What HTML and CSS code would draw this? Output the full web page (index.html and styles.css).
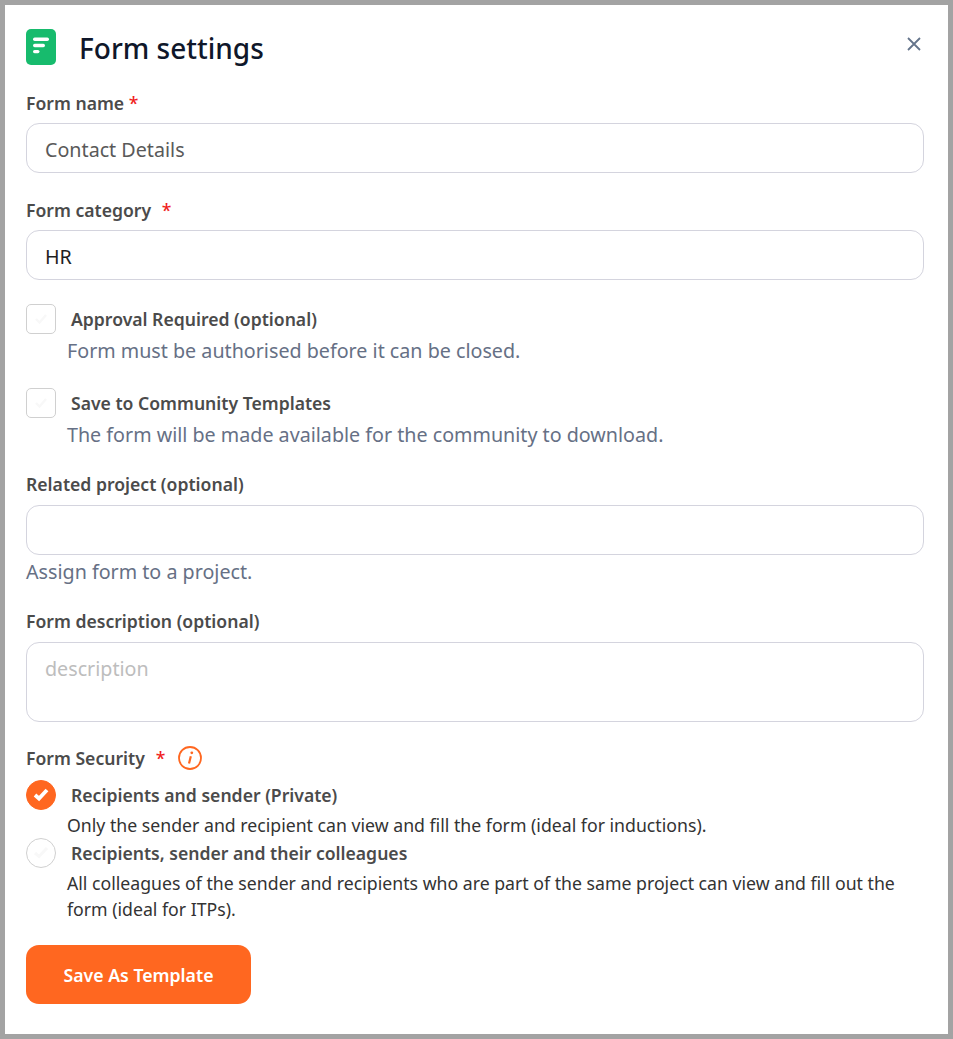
FILE: index.html
```html
<!DOCTYPE html>
<html lang="en">
<head>
<meta charset="utf-8">
<title>Form settings</title>
<link rel="stylesheet" href="styles.css">
</head>
<body>
<div class="dialog">
  <header class="head">
    <svg class="logo" width="30" height="36" viewBox="0 0 30 36"><rect width="30" height="36" rx="5" fill="#17bb6d"/><rect x="7" y="8.5" width="16" height="3.4" rx="1.7" fill="#fff"/><rect x="7" y="14.8" width="12" height="3.4" rx="1.7" fill="#fff"/><rect x="7" y="21" width="6.5" height="3.2" rx="1.6" fill="#fff"/></svg>
    <h1 class="title">Form settings</h1>
    <svg class="close" width="14" height="14" viewBox="0 0 14 14"><path d="M1 1l12 12M13 1L1 13" stroke="#64748b" stroke-width="1.8" fill="none"/></svg>
  </header>

  <label class="label l-name">Form name <span class="req">*</span></label>
  <input class="input muted" value="Contact Details">

  <label class="label l-cat">Form category <span class="req req-gap">*</span></label>
  <input class="input dark" value="HR">

  <div class="check c-first">
    <span class="box"><svg width="16" height="14" viewBox="0 0 16 14"><path d="M3 7l3.5 3.5L13 3" stroke="#f8f8f8" stroke-width="2.4" fill="none"/></svg></span>
    <span class="check-label">Approval Required (optional)</span>
  </div>
  <p class="hint indent">Form must be authorised before it can be closed.</p>

  <div class="check c-second">
    <span class="box"><svg width="16" height="14" viewBox="0 0 16 14"><path d="M3 7l3.5 3.5L13 3" stroke="#f8f8f8" stroke-width="2.4" fill="none"/></svg></span>
    <span class="check-label">Save to Community Templates</span>
  </div>
  <p class="hint indent">The form will be made available for the community to download.</p>

  <label class="label l-proj">Related project (optional)</label>
  <input class="input dark">
  <p class="hint assign">Assign form to a project.</p>

  <label class="label l-desc">Form description (optional)</label>
  <textarea class="input area" placeholder="description"></textarea>

  <div class="label l-sec">
    <span>Form Security</span><span class="req req-sec">*</span>
    <svg class="info" width="24" height="24" viewBox="0 0 24 24"><circle cx="12" cy="12" r="11" fill="none" stroke="#ff6720" stroke-width="1.8"/><circle cx="13.8" cy="6.8" r="1.4" fill="#ff6720"/><path d="M12.8 10.2l-1.8 7.4" stroke="#ff6720" stroke-width="2.2" fill="none"/></svg>
  </div>

  <div class="check r-first">
    <span class="radio on"><svg width="18" height="16" viewBox="0 0 18 16"><path d="M3 8l4 3.5L15 3" stroke="#fff" stroke-width="3.8" fill="none"/></svg></span>
    <span class="check-label">Recipients and sender (Private)</span>
  </div>
  <p class="desc indent">Only the sender and recipient can view and fill the form (ideal for inductions).</p>

  <div class="check">
    <span class="radio"><svg width="18" height="16" viewBox="0 0 18 16"><path d="M3 8l4 3.5L15 3" stroke="#f8f8f8" stroke-width="3" fill="none"/></svg></span>
    <span class="check-label">Recipients, sender and their colleagues</span>
  </div>
  <p class="desc indent">All colleagues of the sender and recipients who are part of the same project can view and fill out the form (ideal for ITPs).</p>

  <button class="save" type="button">Save As Template</button>
</div>
</body>
</html>
```
FILE: styles.css
```css
* { box-sizing: border-box; }
html, body { margin: 0; padding: 0; }
body { background: #fff; font-family: "Noto Sans", "Open Sans", sans-serif; }
.dialog {
  width: 953px; height: 1039px;
  border: 5px solid #a3a3a3;
  padding: 0 24px 0 21px;
  background: #fff;
  display: flex; flex-direction: column;
  overflow: hidden;
}
.head { display: flex; align-items: center; position: relative; height: 36px; margin-top: 24px; flex: none; }
.logo { flex: none; }
.title { margin: 1px 0 0 23px; font-size: 28px; line-height: 36px; font-weight: 500; color: #0f172a; }
.close { position: absolute; right: 3px; top: 8px; }
.label { display: block; font-size: 17.6px; line-height: 24px; font-weight: 600; color: #4b4b4b; flex: none; }
.req { color: #f01e1e; font-weight: 500; }
.req-gap { margin-left: 6px; }
.req-sec { margin-left: 11px; }
.l-name { margin-top: 26px; margin-bottom: 8px; }
.l-cat { margin-top: 25px; margin-bottom: 8px; }
.l-proj { margin-top: 21px; margin-bottom: 9px; }
.l-desc { margin-top: 21px; margin-bottom: 9px; }
.l-sec { display: flex; align-items: center; margin-top: 22px; height: 28px; }
.info { margin-left: 12px; }
.input {
  display: block; width: 100%; height: 50px;
  border: 1px solid #d4d4de; border-radius: 13px;
  padding: 2px 18px 0; background: #fff; outline: none;
  font: 400 19.7px/26px "Noto Sans", "Open Sans", sans-serif;
  flex: none;
}
.muted { color: #595959; }
.dark { color: #1f1f1f; }
.area { height: 80px; padding-top: 13px; resize: none; }
.area::placeholder { color: #bdbdbd; opacity: 1; }
.check { display: flex; align-items: center; flex: none; }
.c-first { margin-top: 24px; }
.c-second { margin-top: 21px; }
.r-first { margin-top: 8px; }
.box, .radio {
  flex: none; width: 30px; height: 30px; border: 1px solid #d0d0d0;
  display: flex; align-items: center; justify-content: center;
}
.box { border-radius: 5px; }
.radio { border-radius: 50%; }
.radio.on { background: #ff6720; border-color: #ff6720; }
.check-label { margin-left: 15px; font-size: 17.6px; line-height: 24px; font-weight: 600; color: #4b4b4b; }
.hint { margin: 1px 0 0; font-size: 19.7px; line-height: 32px; color: #667085; flex: none; }
.indent { margin-left: 41px; }
.desc { margin-top: 2px; margin-bottom: 0; font-size: 17.7px; line-height: 26px; color: #333; flex: none; }
.save {
  width: 225px; height: 59px; margin-top: 23px; flex: none;
  background: #ff6720; color: #fff; border: 0; border-radius: 13px;
  font: 600 17.7px/24px "Noto Sans", "Open Sans", sans-serif;
}
```
